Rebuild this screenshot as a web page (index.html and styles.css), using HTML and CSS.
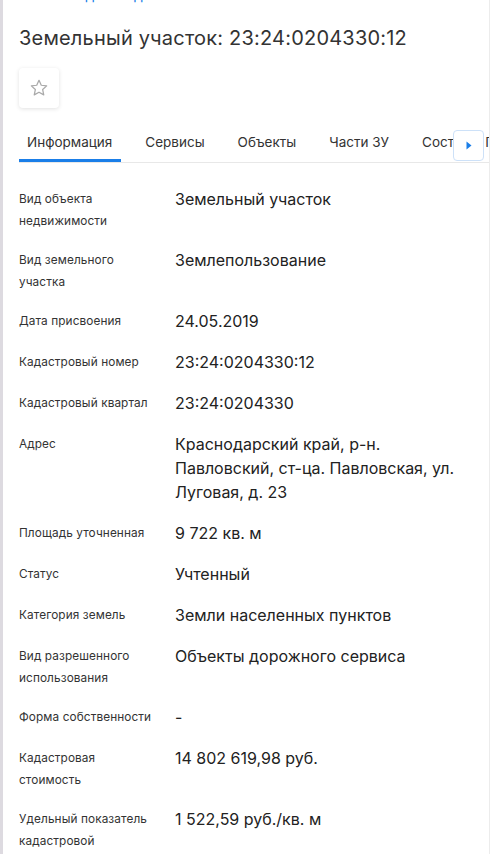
FILE: index.html
```html
<!DOCTYPE html>
<html lang="ru">
<head>
<meta charset="utf-8">
<title>Земельный участок</title>
<link rel="stylesheet" href="styles.css">
</head>
<body>
<div class="page">
  <div class="content">
    <a class="back" href="#"><span class="back-arrow">←</span>Назад к найденным объектам</a>
    <h1 class="title">Земельный участок: 23:24:0204330:12</h1>
    <button class="fav" type="button" aria-label="В избранное">
      <svg width="20" height="20" viewBox="0 0 24 24" fill="none" stroke="#a9a9a9" stroke-width="1.5" stroke-linejoin="round"><path d="M12 2.8l2.75 5.9 6.45.75-4.8 4.4 1.3 6.4L12 17.05 6.3 20.25l1.3-6.4-4.8-4.4 6.45-.75z"/></svg>
    </button>
    <div class="tabs-wrap">
      <nav class="tabs">
        <a class="tab active" href="#">Информация</a>
        <a class="tab" href="#">Сервисы</a>
        <a class="tab" href="#">Объекты</a>
        <a class="tab" href="#">Части ЗУ</a>
        <a class="tab tab-tight" href="#">Состав</a>
        <a class="tab" href="#">Права</a>
      </nav>
      <button class="tabs-next" type="button" aria-label="Далее">
        <svg width="6" height="9" viewBox="0 0 6 9"><path d="M0.5 0.5L5.5 4.5L0.5 8.5z" fill="#1a7ee8"/></svg>
      </button>
    </div>
    <dl class="info">
      <div class="row"><dt>Вид объекта недвижимости</dt><dd>Земельный участок</dd></div>
      <div class="row"><dt>Вид земельного участка</dt><dd>Землепользование</dd></div>
      <div class="row"><dt>Дата присвоения</dt><dd>24.05.2019</dd></div>
      <div class="row"><dt>Кадастровый номер</dt><dd>23:24:0204330:12</dd></div>
      <div class="row"><dt>Кадастровый квартал</dt><dd>23:24:0204330</dd></div>
      <div class="row"><dt>Адрес</dt><dd>Краснодарский край, р-н. Павловский, ст-ца. Павловская, ул. Луговая, д. 23</dd></div>
      <div class="row"><dt>Площадь уточненная</dt><dd>9 722 кв. м</dd></div>
      <div class="row"><dt>Статус</dt><dd>Учтенный</dd></div>
      <div class="row"><dt>Категория земель</dt><dd>Земли населенных пунктов</dd></div>
      <div class="row"><dt>Вид разрешенного использования</dt><dd>Объекты дорожного сервиса</dd></div>
      <div class="row"><dt>Форма собственности</dt><dd>-</dd></div>
      <div class="row"><dt>Кадастровая стоимость</dt><dd>14 802 619,98 руб.</dd></div>
      <div class="row"><dt>Удельный показатель кадастровой стоимости</dt><dd>1 522,59 руб./кв. м</dd></div>
    </dl>
  </div>
</div>
</body>
</html>
```

FILE: styles.css
```css
html {
  margin: 0;
  padding: 0;
  background: #ffffff;
  overflow: hidden;
}
body {
  margin: 0;
  padding: 0;
  font-family: Inter, "Noto Sans", "Liberation Sans", sans-serif;
  color: #333333;
}
.page {
  display: flow-root;
  height: 854px;
  border-left: 3px solid #dddae0;
  border-right: 1px solid #ececec;
  width: 486px;
  box-sizing: content-box;
}
.content {
  padding: 0 0 0 16px;
  margin-top: -16px;
}
.back {
  display: flex;
  align-items: center;
  gap: 14px;
  height: 20px;
  padding-left: 6px;
  color: #1a7ee8;
  font-size: 14px;
  text-decoration: none;
}
.back-arrow {
  font-size: 14px;
}
.title {
  margin: 19px 0 0 0;
  font-size: 20px;
  line-height: 30px;
  font-weight: 400;
  letter-spacing: 0.2px;
  color: #333333;
}
.fav {
  margin-top: 15px;
  width: 40px;
  height: 40px;
  border: none;
  border-radius: 4px;
  background: #ffffff;
  box-shadow: 0 1px 4px rgba(0, 0, 0, 0.12);
  display: flex;
  align-items: center;
  justify-content: center;
  padding: 0;
}
.tabs-wrap {
  position: relative;
  margin-top: 17px;
  border-bottom: 1px solid #e8e8e8;
  overflow: hidden;
}
.tabs {
  display: flex;
  gap: 16px;
  white-space: nowrap;
}
.tab {
  padding: 0 9px 0 8px;
  height: 37px;
  line-height: 35px;
  font-size: 13.5px;
  color: #333333;
  text-decoration: none;
  border-bottom: 3px solid transparent;
  box-sizing: border-box;
  flex: none;
}
.tab.active {
  border-bottom-color: #1a7ee8;
}
.tab-tight {
  padding-right: 0;
  margin-right: -8px;
}
.tabs-next {
  position: absolute;
  left: 434px;
  top: 5px;
  width: 31px;
  height: 31px;
  border: 1px solid #cde1f8;
  border-radius: 4px;
  background: #ffffff;
  display: flex;
  align-items: center;
  justify-content: center;
  padding: 0;
}
.info {
  margin: 25px 0 0 0;
  padding: 0;
}
.row {
  display: flex;
  align-items: flex-start;
  padding-bottom: 17px;
}
.row dt {
  width: 137px;
  margin-right: 19px;
  font-size: 11.8px;
  line-height: 22px;
  letter-spacing: 0.1px;
  color: #333333;
  flex: none;
}
.row dd {
  margin: -1px 0 0 0;
  flex: 1;
  padding: 0 24px 1px 0;
  font-size: 16px;
  line-height: 24px;
  color: #222222;
}
```
